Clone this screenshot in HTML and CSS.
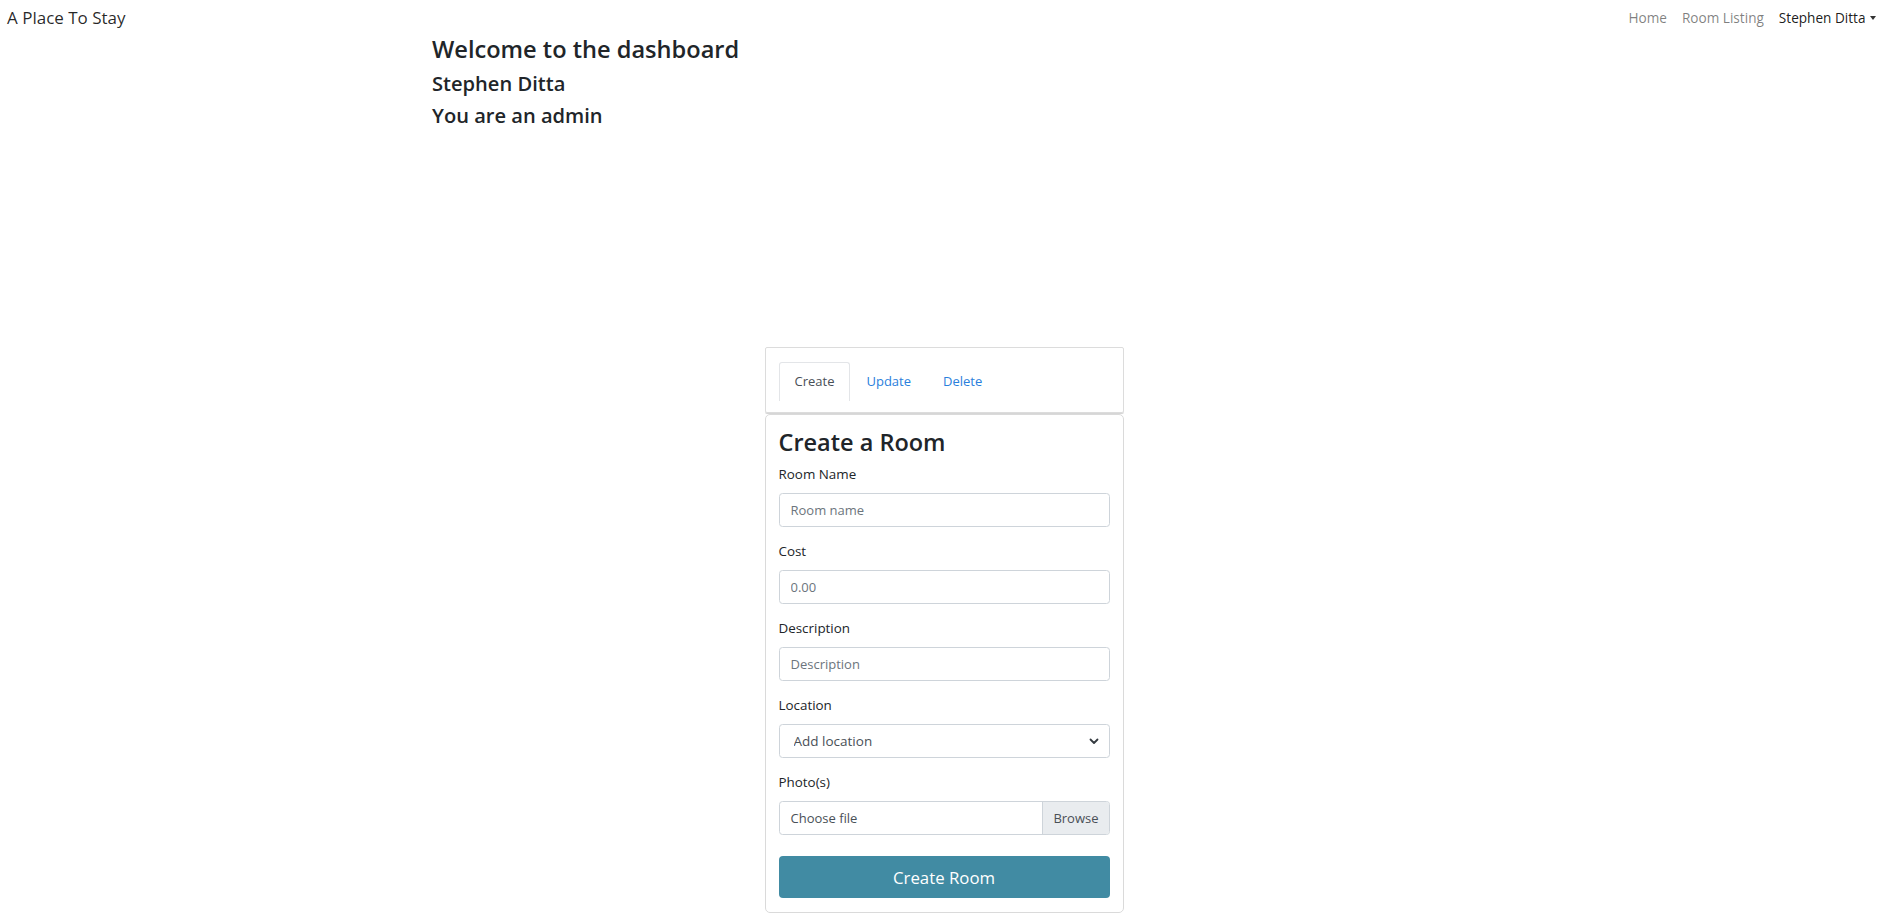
FILE: index.html
```html
<!DOCTYPE html>
<html lang="en">
<head>
<meta charset="utf-8">
<title>A Place To Stay</title>
<link rel="stylesheet" href="styles.css">
</head>
<body>
<nav class="navbar">
  <a class="brand" href="#">A Place To Stay</a>
  <ul class="nav-links">
    <li><a class="nav-link" href="#">Home</a></li>
    <li><a class="nav-link" href="#">Room Listing</a></li>
    <li><a class="nav-link nav-user" href="#">Stephen Ditta<span class="caret"></span></a></li>
  </ul>
</nav>

<main class="container">
  <h3 class="welcome">Welcome to the dashboard</h3>
  <h4 class="sub">Stephen Ditta</h4>
  <h4 class="sub">You are an admin</h4>
</main>

<section class="panel">
  <div class="tab-header">
    <ul class="tabs">
      <li><a class="tab active" href="#">Create</a></li>
      <li><a class="tab" href="#">Update</a></li>
      <li><a class="tab" href="#">Delete</a></li>
    </ul>
  </div>
  <form class="card">
    <h3 class="card-title">Create a Room</h3>
    <div class="form-group">
      <label class="label">Room Name</label>
      <input class="control" type="text" placeholder="Room name">
    </div>
    <div class="form-group">
      <label class="label">Cost</label>
      <input class="control" type="text" placeholder="0.00">
    </div>
    <div class="form-group">
      <label class="label">Description</label>
      <input class="control" type="text" placeholder="Description">
    </div>
    <div class="form-group">
      <label class="label">Location</label>
      <div class="select-wrap">
        <select class="control select"><option>Add location</option></select>
        <svg class="chevron" width="10" height="7" viewBox="0 0 10 7"><path d="M1.5 1.5 L5 5 L8.5 1.5" fill="none" stroke="#343a40" stroke-width="1.8" stroke-linecap="round" stroke-linejoin="round"/></svg>
      </div>
    </div>
    <div class="form-group">
      <label class="label">Photo(s)</label>
      <div class="file-box">
        <span class="file-name">Choose file</span>
        <span class="file-browse">Browse</span>
      </div>
    </div>
    <button class="btn-submit" type="button">Create Room</button>
  </form>
</section>
</body>
</html>
```
FILE: styles.css
```css
* { box-sizing: border-box; }

body {
  margin: 0;
  font-family: "Open Sans", "Noto Sans", sans-serif;
  color: #212529;
  background: #fff;
  font-size: 13px;
  line-height: 21px;
}

a { text-decoration: none; }
ul { list-style: none; margin: 0; padding: 0; }

.navbar {
  display: flex;
  justify-content: space-between;
  align-items: center;
  height: 35px;
  padding: 0 9px 0 7px;
}

.brand {
  font-size: 17px;
  line-height: 26px;
  color: rgba(0,0,0,0.85);
}

.nav-links {
  display: flex;
  align-items: center;
}

.nav-link {
  display: block;
  padding: 0 7.5px;
  font-size: 13.6px;
  color: rgba(0,0,0,0.5);
}

.nav-user { color: rgba(0,0,0,0.9); }

.caret {
  display: inline-block;
  margin-left: 4px;
  vertical-align: 3px;
  border-top: 4.5px solid #333;
  border-left: 3.8px solid transparent;
  border-right: 3.8px solid transparent;
}

.container {
  width: 1028px;
  margin: 0 auto;
}

.welcome {
  margin: 0 0 7px;
  font-size: 23.6px;
  line-height: 29px;
  font-weight: 600;
}

.sub {
  margin: 0 0 7px;
  font-size: 20.1px;
  line-height: 25px;
  font-weight: 600;
}

.panel {
  width: 359px;
  margin: 219px auto 0;
  position: relative;
  left: -2px;
}

.tab-header {
  border: 1px solid #dcdcdc;
  border-radius: 2px;
  padding: 14px 13px 11px;
  height: 66px;
  box-shadow: 0 1px 0 #d6d6d6;
}

.tabs {
  display: flex;
}

.tab {
  display: block;
  height: 39px;
  padding: 8px 15px 0;
  font-size: 13px;
  line-height: 21px;
  color: #2a80dc;
  border: 1px solid transparent;
  border-bottom: 0;
  border-radius: 3px 3px 0 0;
}

.tab.active {
  color: #495057;
  border-color: #e3e5e8;
}

.card {
  margin-top: 1px;
  border: 1px solid #dadada;
  border-radius: 5px;
  padding: 13px 13px 14px;
}

.card-title {
  margin: 0 0 7px;
  font-size: 23.5px;
  line-height: 29px;
  font-weight: 600;
}

.form-group {
  margin-bottom: 14px;
}

.label {
  display: block;
  margin-bottom: 8px;
  font-size: 13.4px;
  line-height: 21px;
}

.control {
  display: block;
  width: 100%;
  height: 34px;
  padding: 0 11px;
  font-family: inherit;
  font-size: 13px;
  color: #495057;
  background: #fff;
  border: 1px solid #ced4da;
  border-radius: 3.5px;
  outline: none;
}

.control::placeholder { color: #6c757d; }

.select-wrap { position: relative; }

.select {
  appearance: none;
  -webkit-appearance: none;
  padding-left: 14px;
  font-size: 13.5px;
  color: #495057;
}

.chevron {
  position: absolute;
  right: 11px;
  top: 14px;
}

.file-box {
  display: flex;
  height: 34px;
  border: 1px solid #ced4da;
  border-radius: 3.5px;
  overflow: hidden;
  font-size: 13px;
}

.file-name {
  flex: 1;
  padding: 0 11px;
  line-height: 32px;
  color: #495057;
}

.file-browse {
  padding: 0 10px;
  line-height: 32px;
  color: #495057;
  background: #e9ecef;
  border-left: 1px solid #ced4da;
}

.btn-submit {
  display: block;
  width: 100%;
  height: 42px;
  margin-top: 21px;
  border: 0;
  border-radius: 4px;
  background: #418ba3;
  color: #fff;
  font-family: inherit;
  font-size: 16.8px;
}
```
